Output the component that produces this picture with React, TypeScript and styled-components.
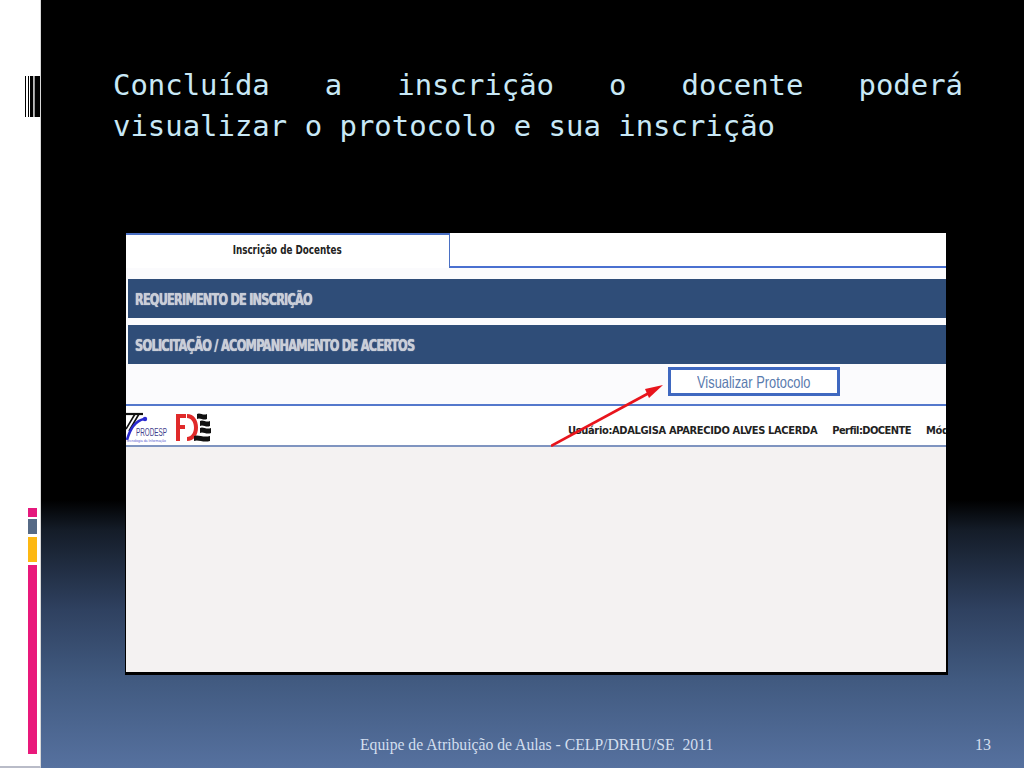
import React from "react";
import styled, { createGlobalStyle } from "styled-components";

const Global = createGlobalStyle`
  html, body { margin: 0; padding: 0; background: #000; }
  #root { width: 1024px; height: 768px; overflow: hidden; }
`;

const Slide = styled.div`
  width: 1024px;
  height: 768px;
  display: flex;
  overflow: hidden;
`;

const Rail = styled.aside`
  width: 41px;
  flex: none;
  background: #fff;
  border-right: 1px solid #d8d8d8;
  border-bottom: 2px solid #b9bcc8;
  box-sizing: border-box;
  display: flex;
  flex-direction: column;
  padding-top: 76px;
  padding-bottom: 12px;
`;

const Barcode = styled.svg`
  display: block;
  width: 16px;
  height: 41px;
  margin-left: 24px;
`;

const Blocks = styled.div`
  margin-top: auto;
  margin-left: 28px;
  width: 9px;
  display: flex;
  flex-direction: column;
`;

const Block = styled.div<{ $h: number; $c: string; $gap: number }>`
  height: ${(p) => p.$h}px;
  margin-top: ${(p) => p.$gap}px;
  background: ${(p) => p.$c};
`;

const Main = styled.main`
  flex: 1;
  position: relative;
  display: flex;
  flex-direction: column;
  background: linear-gradient(
    180deg,
    #000 0,
    #000 500px,
    #141c28 530px,
    #2f4160 610px,
    #415a80 680px,
    #56719f 768px
  );
`;

const Title = styled.h1`
  margin: 65px 0 0 72px;
  width: 850px;
  font: 400 28.95px/40.5px "DejaVu Sans Mono", monospace;
  color: #c8e8f6;
  text-align: justify;
`;

const Shot = styled.section`
  position: relative;
  margin: 87px 0 0 84px;
  width: 823px;
  height: 442px;
  box-sizing: border-box;
  background: #fbfbfd;
  border-left: 1px solid #000;
  border-right: 2px solid #000;
  border-bottom: 3px solid #000;
  display: flex;
  flex-direction: column;
  overflow: hidden;
`;

const TabRow = styled.div`
  height: 35px;
  display: flex;
  flex: none;
`;

const Tab = styled.div`
  width: 324px;
  box-sizing: border-box;
  border-top: 2px solid #4a70c4;
  border-right: 1px solid #4a70c4;
  background: #fff;
  display: flex;
  align-items: center;
  justify-content: center;
  padding-bottom: 3px;
  font: 700 11.5px "DejaVu Sans Condensed", "DejaVu Sans", sans-serif;
  color: #222;
`;

const Narrow = styled.span<{ $x: number }>`
  display: inline-block;
  white-space: nowrap;
  transform: scaleX(${(p) => p.$x});
  transform-origin: center left;
`;

const CenteredNarrow = styled(Narrow)`
  transform-origin: center;
`;

const TabRest = styled.div`
  flex: 1;
  background: #fff;
  border-bottom: 2px solid #4a70d0;
`;

const Bars = styled.div`
  margin: 11px 0 0 2px;
  display: flex;
  flex-direction: column;
  gap: 7px;
`;

const Bar = styled.div`
  height: 39px;
  box-sizing: border-box;
  background: #2f4d78;
  display: flex;
  align-items: center;
  padding: 3px 0 0 7px;
  font: 700 15px "DejaVu Sans Condensed", "Liberation Sans", sans-serif;
  letter-spacing: -0.9px;
  color: #c9ced8;
  text-shadow: 0 0 1px #e8e8e8;
`;

const ButtonRow = styled.div`
  height: 42px;
  flex: none;
  display: flex;
  justify-content: flex-start;
  padding: 3px 0 0 542px;
  box-sizing: border-box;
  border-bottom: 2px solid #5478cc;
`;

const ProtoButton = styled.div`
  width: 172px;
  height: 29px;
  box-sizing: border-box;
  border: 3px solid #3f68c0;
  background: #fff;
  display: flex;
  align-items: center;
  justify-content: center;
  padding-top: 1px;
  font: 400 16.5px "Liberation Sans", sans-serif;
  color: #5a7bae;
`;

const InfoRow = styled.div`
  height: 41px;
  flex: none;
  box-sizing: border-box;
  background: #fff;
  border-bottom: 2px solid #7f94c0;
  display: flex;
  align-items: center;
  overflow: hidden;
  white-space: nowrap;
`;

const Logos = styled.svg`
  width: 90px;
  height: 39px;
  flex: none;
`;

const LogoText = styled.text`
  font-family: "Liberation Sans", sans-serif;
`;

const UserInfo = styled.div`
  margin: 10px 0 0 352px;
  display: flex;
  gap: 15px;
  font: 700 11px "DejaVu Sans Condensed", "DejaVu Sans", sans-serif;
  letter-spacing: -0.33px;
  color: #222;
`;

const Profile = styled.span`
  letter-spacing: -0.55px;
`;

const Empty = styled.div`
  flex: 1;
  background: #f4f2f2;
`;

const Arrow = styled.svg`
  position: absolute;
  left: 425px;
  top: 138px;
  width: 120px;
  height: 76px;
`;

const Footer = styled.footer`
  position: absolute;
  left: 319px;
  top: 737px;
  font: 400 15.7px/16px "Liberation Serif", serif;
  color: #d2deee;
  white-space: pre;
`;

const PageNumber = styled.div`
  position: absolute;
  left: 934px;
  top: 736px;
  font: 400 16px/18px "Liberation Serif", serif;
  color: #d2deee;
`;

export default function App() {
  return (
    <>
      <Global />
      <Slide>
        <Rail>
          <Barcode viewBox="0 0 16 41">
            <rect x="1" width="1" height="41" fill="#000" />
            <rect x="4" width="1" height="41" fill="#000" />
            <rect x="6" width="3" height="41" fill="#000" />
            <rect x="9" width="1" height="41" fill="#bbb" />
            <rect x="10" width="1" height="41" fill="#999" />
            <rect x="11" width="5" height="41" fill="#000" />
          </Barcode>
          <Blocks>
            <Block $h={9} $gap={0} $c="#e5197d" />
            <Block $h={15} $gap={2} $c="#566a86" />
            <Block $h={25} $gap={3} $c="#fdb813" />
            <Block $h={189} $gap={3} $c="#e9197b" />
          </Blocks>
        </Rail>
        <Main>
          <Title>
            Concluída a inscrição o docente poderá visualizar o protocolo e sua inscrição
          </Title>
          <Shot>
            <TabRow>
              <Tab>
                <CenteredNarrow $x={0.85}>Inscrição de Docentes</CenteredNarrow>
              </Tab>
              <TabRest />
            </TabRow>
            <Bars>
              <Bar>
                <Narrow $x={0.835}>REQUERIMENTO DE INSCRIÇÃO</Narrow>
              </Bar>
              <Bar>
                <Narrow $x={0.845}>SOLICITAÇÃO / ACOMPANHAMENTO DE ACERTOS</Narrow>
              </Bar>
            </Bars>
            <ButtonRow>
              <ProtoButton>
                <CenteredNarrow $x={0.78}>Visualizar Protocolo</CenteredNarrow>
              </ProtoButton>
            </ButtonRow>
            <InfoRow>
              <Logos viewBox="0 0 90 39">
                <path d="M0 8H17" stroke="#111" strokeWidth="2.2" fill="none" />
                <path d="M9 8L0 23M13 8L3 25" stroke="#111" strokeWidth="1.6" fill="none" />
                <path d="M1 34C4 23 9 15 18 13" stroke="#2a2ad0" strokeWidth="2.6" fill="none" />
                <circle cx="19" cy="13" r="2.2" fill="#2a2ad0" />
                <LogoText x="10" y="30" fontSize="10" fill="#3f3f8c" textLength="31" lengthAdjust="spacingAndGlyphs">PRODESP</LogoText>
                <LogoText x="0" y="35.5" fontSize="4" fill="#5a5ad0" textLength="40" lengthAdjust="spacingAndGlyphs">Tecnologia da Informação</LogoText>
                <path d="M50 8h10v4h-6v7h5v4h-5v12h-4z" fill="#e02a2a" />
                <path d="M61 8c7 0 11 6 11 13.500s-4 13.500-11 13.500v-4c4 0 7-4 7-9.500s-3-9.500-7-9.500z" fill="#e02a2a" />
                <path d="M71 8c3-2 6 2 10 0v5c-4 2-7-2-10 0zM74 15c3-2 6 2 10 0v5c-4 2-7-2-10 0zM74 22c3-2 6 2 11 0v5c-5 2-8-2-11 0zM68 30c4-2 9 2 16 0v5c-7 2-12-2-16 0z" fill="#111" />
              </Logos>
              <UserInfo>
                <span>Usuário:ADALGISA APARECIDO ALVES LACERDA</span>
                <Profile>Perfil:DOCENTE</Profile>
                <span>Mód</span>
              </UserInfo>
            </InfoRow>
            <Empty />
            <Arrow viewBox="0 0 120 76">
              <path d="M0 75L98 22" stroke="#e8141c" strokeWidth="2.6" fill="none" />
              <path d="M112 14L94 18L98 27Z" fill="#e8141c" />
            </Arrow>
          </Shot>
          <Footer>Equipe de Atribuição de Aulas - CELP/DRHU/SE  2011</Footer>
          <PageNumber>13</PageNumber>
        </Main>
      </Slide>
    </>
  );
}
